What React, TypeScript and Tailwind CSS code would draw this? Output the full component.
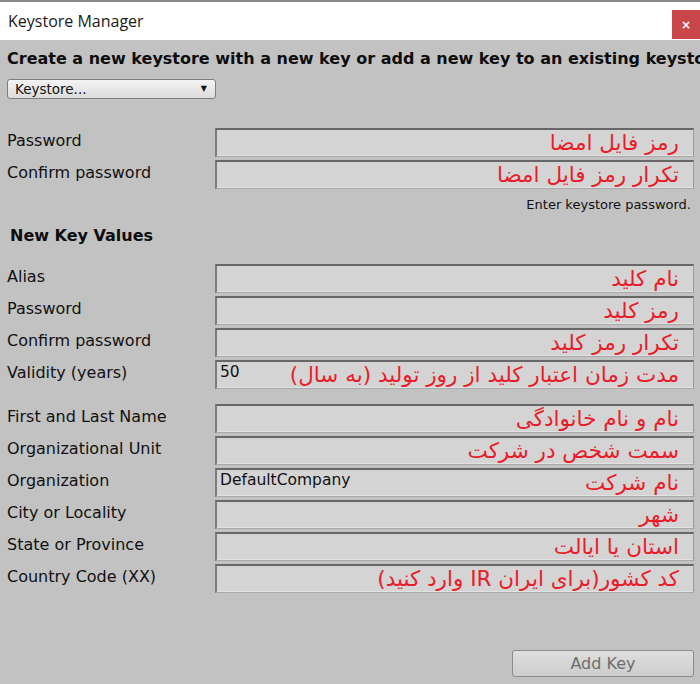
import React from "react";

const font = { fontFamily: '"DejaVu Sans", "Liberation Sans", sans-serif' };

type Row = { label: string; fa: string; value?: string };

function Field({ fa, value }: { fa: string; value?: string }) {
  return (
    <div className="relative h-[29px] flex-1 border-t-2 border-l-2 border-r border-b border-t-[#676767] border-l-[#7c7c7c] border-r-[#9c9c9c] border-b-[#a9a9a9] bg-[#d4d4d4] shadow-[inset_0_-1px_0_#e2e2e2]">
      {value && (
        <span className="absolute left-[3px] top-[0px] text-[15.5px] leading-[20px] text-[#111]">{value}</span>
      )}
      <div
        dir="rtl"
        className="absolute right-[14px] top-[-2px] text-[21.5px] leading-[30px] text-[#ea1c2a] whitespace-nowrap"
      >
        {fa}
      </div>
    </div>
  );
}

function FormRow({ label, fa, value }: Row) {
  return (
    <div className="flex items-start">
      <div className="w-[208px] pt-[3px] text-[16px] text-[#111] leading-[19px]">{label}</div>
      <Field fa={fa} value={value} />
    </div>
  );
}

export default function App() {
  const rowsA: Row[] = [
    { label: "Alias", fa: "نام کلید" },
    { label: "Password", fa: "رمز کلید" },
    { label: "Confirm password", fa: "تکرار رمز کلید" },
    { label: "Validity (years)", fa: "مدت زمان اعتبار کلید از روز تولید (به سال)", value: "50" },
  ];
  const rowsB: Row[] = [
    { label: "First and Last Name", fa: "نام و نام خانوادگی" },
    { label: "Organizational Unit", fa: "سمت شخص در شرکت" },
    { label: "Organization", fa: "نام شرکت", value: "DefaultCompany" },
    { label: "City or Locality", fa: "شهر" },
    { label: "State or Province", fa: "استان یا ایالت" },
    { label: "Country Code (XX)", fa: "کد کشور(برای ایران IR وارد کنید)" },
  ];
  return (
    <div className="w-[700px] h-[684px] overflow-hidden flex flex-col bg-[#c2c2c2]" style={font}>
      {/* title bar */}
      <div className="h-[40px] shrink-0 bg-white border-t-2 border-[#8a8a8a] flex items-center justify-between">
        <span
          className="pl-[8px] text-[16px] text-[#1a1a1a]"
          style={{ fontFamily: '"Open Sans", "Noto Sans", sans-serif' }}
        >
          Keystore Manager
        </span>
        <div className="w-[28px] h-[29px] bg-[#c9474b] flex items-center justify-center text-white text-[12px] font-bold self-end mb-[1px]">
          ×
        </div>
      </div>

      <div className="flex flex-col pl-[7px] pr-[6px]">
        <div className="mt-[9px] mr-[-6px] text-[16px] font-bold text-[#0d0d0d] whitespace-nowrap leading-[20px] overflow-hidden">
          Create a new keystore with a new key or add a new key to an existing keystore
        </div>
        <div className="mt-[10px] w-[209px] h-[20px] rounded-[3px] border border-[#7e7e7e] bg-gradient-to-b from-[#f4f4f4] to-[#dcdcdc] flex items-center justify-between pl-[7px] pr-[8px]">
          <span className="text-[13.5px] text-[#111]">Keystore...</span>
          <span className="text-[8px] text-[#111]">▼</span>
        </div>

        <div className="mt-[29px] flex flex-col gap-[3px]">
          <FormRow label="Password" fa="رمز فایل امضا" />
          <FormRow label="Confirm password" fa="تکرار رمز فایل امضا" />
        </div>
        <div className="mt-[8px] text-right pr-[3px] text-[13px] text-[#111] leading-[16px]">
          Enter keystore password.
        </div>
        <div className="mt-[13px] pl-[3px] text-[16px] font-bold text-[#0d0d0d] leading-[20px]">New Key Values</div>

        <div className="mt-[18px] flex flex-col gap-[3px]">
          {rowsA.map((r) => (
            <FormRow key={r.label} {...r} />
          ))}
        </div>
        <div className="mt-[15px] flex flex-col gap-[3px]">
          {rowsB.map((r) => (
            <FormRow key={r.label} {...r} />
          ))}
        </div>

        <div className="mt-[57px] flex justify-end">
          <div className="w-[182px] h-[27px] rounded-[3px] border border-[#8c8c8c] bg-gradient-to-b from-[#dedede] to-[#cdcdcd] flex items-center justify-center text-[16px] text-[#6d6d6d]">
            Add Key
          </div>
        </div>
      </div>
    </div>
  );
}
